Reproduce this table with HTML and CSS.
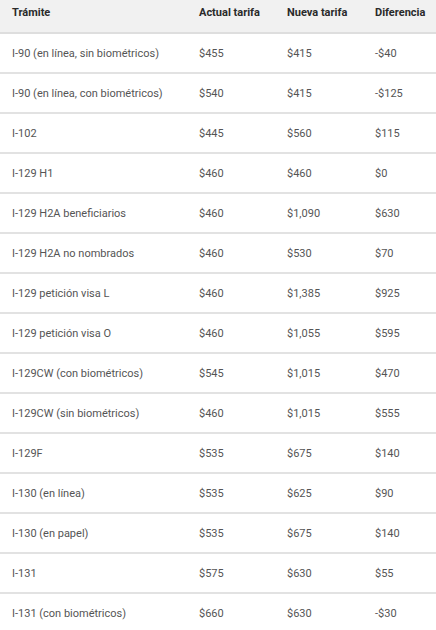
FILE: index.html
```html
<!DOCTYPE html>
<html lang="es">
<head>
<meta charset="utf-8">
<link rel="stylesheet" href="styles.css">
</head>
<body>
<table class="fees">
<thead>
<tr><th>Trámite</th><th>Actual tarifa</th><th>Nueva tarifa</th><th>Diferencia</th></tr>
</thead>
<tbody>
<tr><td>I-90 (en línea, sin biométricos)</td><td>$455</td><td>$415</td><td>-$40</td></tr>
<tr><td>I-90 (en línea, con biométricos)</td><td>$540</td><td>$415</td><td>-$125</td></tr>
<tr><td>I-102</td><td>$445</td><td>$560</td><td>$115</td></tr>
<tr><td>I-129 H1</td><td>$460</td><td>$460</td><td>$0</td></tr>
<tr><td>I-129 H2A beneficiarios</td><td>$460</td><td>$1,090</td><td>$630</td></tr>
<tr><td>I-129 H2A no nombrados</td><td>$460</td><td>$530</td><td>$70</td></tr>
<tr><td>I-129 petición visa L</td><td>$460</td><td>$1,385</td><td>$925</td></tr>
<tr><td>I-129 petición visa O</td><td>$460</td><td>$1,055</td><td>$595</td></tr>
<tr><td>I-129CW (con biométricos)</td><td>$545</td><td>$1,015</td><td>$470</td></tr>
<tr><td>I-129CW (sin biométricos)</td><td>$460</td><td>$1,015</td><td>$555</td></tr>
<tr><td>I-129F</td><td>$535</td><td>$675</td><td>$140</td></tr>
<tr><td>I-130 (en línea)</td><td>$535</td><td>$625</td><td>$90</td></tr>
<tr><td>I-130 (en papel)</td><td>$535</td><td>$675</td><td>$140</td></tr>
<tr><td>I-131</td><td>$575</td><td>$630</td><td>$55</td></tr>
<tr><td>I-131 (con biométricos)</td><td>$660</td><td>$630</td><td>-$30</td></tr>
</tbody>
</table>
</body>
</html>
```
FILE: styles.css
```css
html, body {
  margin: 0;
  padding: 0;
  background: #fff;
}
.fees {
  width: 436px;
  border-collapse: collapse;
  table-layout: fixed;
  font-family: Roboto, "Noto Sans", sans-serif;
  font-size: 11px;
  color: #555;
}
.fees th {
  background: #f1f1f1;
  color: #2a2a2a;
  font-weight: 700;
  text-align: left;
  height: 33px;
  padding: 6px 0 0 12px;
  vertical-align: top;
  box-sizing: border-box;
  border-bottom: 2px solid #dedede;
}
.fees td {
  height: 40px;
  padding: 1px 0 0 12px;
  border-bottom: 2px solid #e2e2e2;
  box-sizing: border-box;
}
.fees th:nth-child(1), .fees td:nth-child(1) { width: 187px; }
.fees th:nth-child(2), .fees td:nth-child(2) { width: 88px; }
.fees th:nth-child(3), .fees td:nth-child(3) { width: 88px; }
.fees th:nth-child(4), .fees td:nth-child(4) { width: 73px; }
```
